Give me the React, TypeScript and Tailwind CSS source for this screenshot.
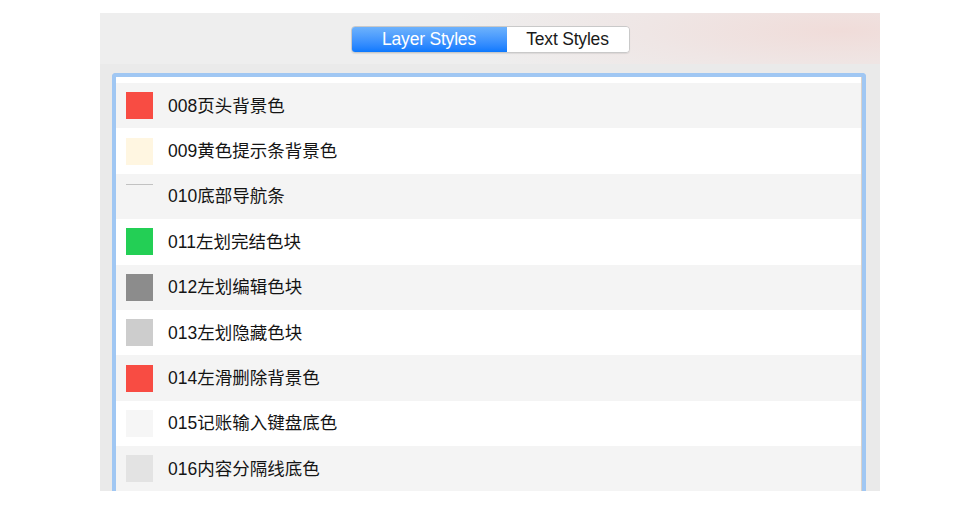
import React from "react";

type Row = { label: string; swatch: string; line?: boolean };

const rows: Row[] = [
  { label: "008页头背景色", swatch: "bg-[#f84c43]" },
  { label: "009黄色提示条背景色", swatch: "bg-[#fff6e1]" },
  { label: "010底部导航条", swatch: "", line: true },
  { label: "011左划完结色块", swatch: "bg-[#23cf55]" },
  { label: "012左划编辑色块", swatch: "bg-[#8c8c8c]" },
  { label: "013左划隐藏色块", swatch: "bg-[#cdcdcd]" },
  { label: "014左滑删除背景色", swatch: "bg-[#f84c43]" },
  { label: "015记账输入键盘底色", swatch: "bg-[#f6f6f6]" },
  { label: "016内容分隔线底色", swatch: "bg-[#e3e3e3]" },
];

export default function App() {
  return (
    <div className="w-[980px] h-[521px] bg-white pt-[13px] font-['Liberation_Sans','Noto_Sans_CJK_SC',sans-serif]">
      <div className="ml-[100px] w-[780px] h-[478px] overflow-hidden bg-[#eaeaea] flex flex-col">
        {/* Toolbar with segmented control */}
        <div className="h-[51px] shrink-0 flex items-center justify-center bg-[radial-gradient(ellipse_50%_140%_at_95%_35%,#f0dcd9_0%,#efe6e5_50%,#eeeeee_100%)]">
          <div className="flex h-[27px] mt-[2px] rounded-[4px] border border-[#c9c9c9] overflow-hidden shadow-[0_1px_1px_rgba(0,0,0,0.08)]">
            <div className="w-[155px] flex items-center justify-center bg-gradient-to-b from-[#6db2fc] to-[#0a79fe] text-white text-[17.5px] tracking-[-0.2px]">
              Layer Styles
            </div>
            <div className="w-[122px] flex items-center justify-center bg-white text-[#1a1a1a] text-[17.5px] tracking-[-0.2px]">
              Text Styles
            </div>
          </div>
        </div>
        {/* List */}
        <div className="flex-1 pt-[9px] pl-[12px] pr-[14px]">
          <div className="h-full border-4 border-b-0 border-[#a0c7f3] rounded-t-[4px] bg-white">
            <div className="pt-[6px] border-r border-[#d8d2cc]">
              {rows.map((r, i) => (
                <div
                  key={r.label}
                  className={`h-[45.4px] flex items-center pl-[10px] ${i % 2 === 0 ? "bg-[#f4f4f4]" : "bg-white"}`}
                >
                  {r.line ? (
                    <div className="w-[27px] h-[27px] flex items-start">
                      <div className="w-full h-px bg-[#c2c2c2] mt-[1px]" />
                    </div>
                  ) : (
                    <div className={`w-[27px] h-[27px] ${r.swatch}`} />
                  )}
                  <span className="ml-[15px] text-[17.5px] text-[#141414]">{r.label}</span>
                </div>
              ))}
            </div>
          </div>
        </div>
      </div>
    </div>
  );
}
